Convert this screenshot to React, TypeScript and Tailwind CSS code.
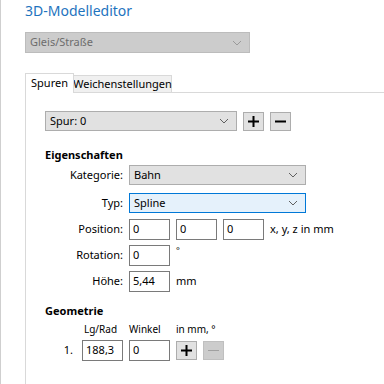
import React from "react";

const font = { fontFamily: '"Noto Sans", "Open Sans", sans-serif' };

function Chevron({ color = "#606060" }: { color?: string }) {
  return (
    <svg width="10" height="6" viewBox="0 0 10 6" className="shrink-0">
      <polyline points="1,1 5,5 9,1" fill="none" stroke={color} strokeWidth="1" />
    </svg>
  );
}

function Select({ value, className, active }: { value: string; className: string; active?: boolean }) {
  return (
    <div
      className={`flex items-center justify-between pl-[4px] pr-[7px] h-[20px] border text-[11px] text-black ${
        active ? "bg-[#e5f1fb] border-[#0078d7]" : "bg-[#e1e1e1] border-[#adadad]"
      } ${className}`}
    >
      <span>{value}</span>
      <Chevron />
    </div>
  );
}

function Input({ value, className = "w-[41px]" }: { value: string; className?: string }) {
  return (
    <div className={`h-[21px] border border-[#7a7a7a] bg-white pl-[3px] flex items-center text-[11px] ${className}`}>
      {value}
    </div>
  );
}

function PlusBtn() {
  return (
    <div className="w-[21px] h-[19px] bg-[#e1e1e1] border border-[#adadad] flex items-center justify-center">
      <svg width="11" height="11" viewBox="0 0 11 11">
        <rect x="4.5" y="0" width="2" height="11" fill="#000" />
        <rect x="0" y="4.5" width="11" height="2" fill="#000" />
      </svg>
    </div>
  );
}

function MinusBtn({ disabled }: { disabled?: boolean }) {
  return (
    <div
      className={`w-[21px] h-[19px] border flex items-center justify-center ${
        disabled ? "bg-[#cccccc] border-[#bfbfbf]" : "bg-[#e1e1e1] border-[#adadad]"
      }`}
    >
      <svg width="11" height="11" viewBox="0 0 11 11">
        <rect x="0" y={disabled ? 5 : 4.5} width="11" height={disabled ? 1 : 2} fill={disabled ? "#a0a0a0" : "#000"} />
      </svg>
    </div>
  );
}

function Row({ label, className = "", children }: { label: string; className?: string; children: React.ReactNode }) {
  return (
    <div className={`flex items-center gap-[6px] ${className}`}>
      <div className="w-[78px] text-right text-[11px] text-black">{label}</div>
      {children}
    </div>
  );
}

export default function App() {
  return (
    <div className="w-[384px] h-[384px] overflow-hidden bg-white flex" style={font}>
      <div className="w-[1px] bg-[#cfcfcf] shrink-0" />
      <div className="pl-[24px] flex-1 flex flex-col">
        <div className="pt-[1px] h-[32px] text-[14px] text-[#1e73be] leading-[19px]">3D-Modelleditor</div>
        <div className="w-[225px] h-[21px] bg-[#cccccc] border border-[#bcbcbc] flex items-center justify-between pl-[4px] pr-[7px] text-[11px] text-[#6d6d6d]">
          <span>Gleis/Straße</span>
          <Chevron color="#9a9a9a" />
        </div>

        {/* Tabs */}
        <div className="flex items-end mt-[19px] h-[20px]">
          <div className="w-[49px] h-[20px] bg-white border border-b-0 border-[#d9d9d9] flex items-center justify-center text-[11px] relative top-[1px] z-10">
            Spuren
          </div>
          <div className="w-[98px] h-[17px] bg-[#f0f0f0] border border-l-0 border-b-0 border-[#d9d9d9] flex items-center justify-center text-[11px]">
            Weichenstellungen
          </div>
        </div>

        {/* Panel */}
        <div className="flex-1 border-t border-l border-[#d9d9d9] pl-[19px] pt-[18px] text-[11px] text-black">
          <div className="flex items-center gap-[6px]">
            <Select value="Spur: 0" className="w-[192px]" />
            <PlusBtn />
            <MinusBtn />
          </div>

          <div className="mt-[16px] font-bold text-[11px] leading-[16px]">Eigenschaften</div>

          <div className="mt-[2px] flex flex-col">
            <Row label="Kategorie:">
              <Select value="Bahn" className="w-[177px]" />
            </Row>
            <Row label="Typ:" className="mt-[8px]">
              <Select value="Spline" className="w-[177px]" active />
            </Row>
            <Row label="Position:" className="mt-[6px]">
              <Input value="0" />
              <Input value="0" />
              <Input value="0" />
              <span>x, y, z in mm</span>
            </Row>
            <Row label="Rotation:" className="mt-[5px]">
              <Input value="0" />
              <span className="text-[9px] self-start leading-[12px]">°</span>
            </Row>
            <Row label="Höhe:" className="mt-[5px]">
              <Input value="5,44" />
              <span>mm</span>
            </Row>
          </div>

          <div className="mt-[11px] font-bold text-[11px] leading-[16px]">Geometrie</div>

          <div className="mt-[3px] flex items-center gap-[6px] text-[10px] leading-[14px]">
            <div className="w-[31px]" />
            <div className="w-[41px] text-center pr-[4px]">Lg/Rad</div>
            <div className="w-[41px]">Winkel</div>
            <div>in mm, °</div>
          </div>

          <div className="mt-[4px] flex items-center gap-[6px]">
            <div className="w-[31px] text-right pr-[3px]">1.</div>
            <Input value="188,3" />
            <Input value="0" />
            <PlusBtn />
            <MinusBtn disabled />
          </div>
        </div>
      </div>
    </div>
  );
}
